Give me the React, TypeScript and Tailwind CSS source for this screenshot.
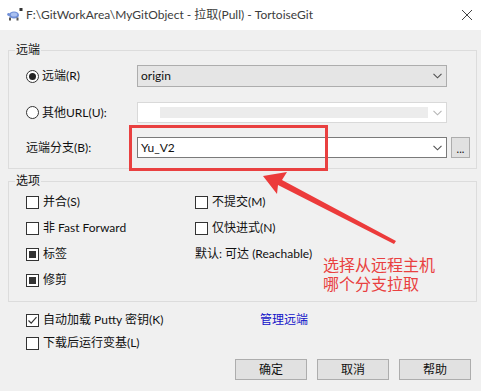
import React from "react";

const font = "font-['Lato','Noto_Sans_CJK_SC',sans-serif]";

function Chevron({ light }: { light?: boolean }) {
  return (
    <svg width="9" height="6" viewBox="0 0 9 6" className="shrink-0">
      <path d="M0.5 0.8 L4.5 4.8 L8.5 0.8" fill="none" stroke={light ? "#b5b5b5" : "#505050"} strokeWidth="1.1" />
    </svg>
  );
}

function Radio({ on }: { on?: boolean }) {
  return (
    <span className="w-[13px] h-[13px] rounded-full border border-[#333] bg-white flex items-center justify-center shrink-0">
      {on && <span className="w-[7px] h-[7px] rounded-full bg-[#222]" />}
    </span>
  );
}

function Check({ state }: { state?: "on" | "mixed" }) {
  return (
    <span className="w-[13px] h-[13px] border border-[#333] bg-white flex items-center justify-center shrink-0">
      {state === "mixed" && <span className="w-[7px] h-[7px] bg-[#333]" />}
      {state === "on" && (
        <svg width="11" height="11" viewBox="0 0 11 11">
          <path d="M1.5 5.5 L4.2 8.2 L9.5 2.2" fill="none" stroke="#333" strokeWidth="1.2" />
        </svg>
      )}
    </span>
  );
}

function Opt({ label, state }: { label: string; state?: "on" | "mixed" }) {
  return (
    <div className="flex items-center gap-[4px] h-[16px]">
      <Check state={state} />
      <span>{label}</span>
    </div>
  );
}

export default function App() {
  return (
    <div className={`w-[481px] h-[391px] bg-[#f0f0f0] relative overflow-hidden text-[12px] leading-[16px] text-[#111] ${font}`}>
      {/* title bar */}
      <div className="h-[30px] bg-white flex items-center pl-[7px] pr-[4px]">
        <svg width="16" height="16" viewBox="0 0 16 16" className="shrink-0">
          <ellipse cx="7" cy="8" rx="5" ry="3.6" fill="#6f8fd8" />
          <ellipse cx="7" cy="7.4" rx="3.2" ry="2" fill="#a9c0f0" />
          <rect x="2" y="10.5" width="2" height="3" fill="#555" />
          <rect x="9.5" y="10.5" width="2" height="3" fill="#555" />
          <circle cx="1.6" cy="7.5" r="1.4" fill="#6f8fd8" />
          <rect x="12.5" y="1" width="3" height="3" fill="#333" />
        </svg>
        <span className="ml-[3px] text-[#3c3c3c]">F:\GitWorkArea\MyGitObject - 拉取(Pull) - TortoiseGit</span>
        <svg width="12" height="12" viewBox="0 0 12 12" className="ml-auto mr-[4px]">
          <path d="M1 1 L11 11 M11 1 L1 11" stroke="#444" strokeWidth="1" />
        </svg>
      </div>

      <div className="pl-[8px]">
        {/* remote group */}
        <fieldset className="mt-[12px] w-[469px] border border-[#dcdcdc]">
          <legend className="ml-[6px] px-[1px]">远端</legend>
          <div className="pl-[17px] pt-[7px] pb-[10px]">
            <div className="flex items-center h-[22px]">
              <div className="w-[111px] flex items-center gap-[3px]">
                <Radio on />
                <span>远端(R)</span>
              </div>
              <div className="w-[310px] h-[22px] bg-[#e5e5e5] border border-[#adadad] flex items-center pl-[3px] pr-[4px]">
                <span className="flex-1">origin</span>
                <Chevron />
              </div>
            </div>
            <div className="flex items-center h-[21px] mt-[15px]">
              <div className="w-[111px] flex items-center gap-[3px]">
                <Radio />
                <span>其他URL(U):</span>
              </div>
              <div className="w-[310px] h-[21px] bg-white border border-[#d9d9d9] flex items-center pl-[22px] pr-[4px]">
                <div className="w-[268px] h-[11px] bg-[#ececec]" />
                <span className="ml-auto">
                  <Chevron light />
                </span>
              </div>
            </div>
            <div className="flex items-center h-[21px] mt-[14px]">
              <div className="w-[111px]">远端分支(B):</div>
              <div className="w-[310px] h-[21px] bg-white border border-[#7a7a7a] flex items-center pl-[3px] pr-[4px]">
                <span className="flex-1">Yu_V2</span>
                <Chevron />
              </div>
              <div className="ml-[4px] w-[19px] h-[21px] bg-[#e1e1e1] border border-[#adadad] flex items-end justify-center pb-[3px] text-[11px] leading-[11px]">
                ...
              </div>
            </div>
          </div>
        </fieldset>

        {/* options group */}
        <fieldset className="mt-[4px] w-[469px] border border-[#dcdcdc]">
          <legend className="ml-[6px] px-[1px]">选项</legend>
          <div className="pl-[17px] pt-[5px] pb-[13px] grid grid-cols-[169px_1fr] gap-y-[10px]">
            <Opt label="并合(S)" />
            <Opt label="不提交(M)" />
            <Opt label="非 Fast Forward" />
            <Opt label="仅快进式(N)" />
            <Opt label="标签" state="mixed" />
            <div className="h-[16px]">默认: 可达 (Reachable)</div>
            <Opt label="修剪" state="mixed" />
          </div>
        </fieldset>

        <div className="pl-[18px] mt-[10px] flex items-center">
          <div className="w-[234px]">
            <Opt label="自动加载 Putty 密钥(K)" state="on" />
          </div>
          <span className="text-[#1212c8]">管理远端</span>
        </div>
        <div className="pl-[18px] mt-[7px]">
          <Opt label="下载后运行变基(L)" />
        </div>

        <div className="mt-[8px] flex justify-end gap-[10px] pr-[10px]">
          {["确定", "取消", "帮助"].map((b) => (
            <div key={b} className="w-[72px] h-[21px] bg-[#e1e1e1] border border-[#adadad] flex items-center justify-center">
              {b}
            </div>
          ))}
        </div>
      </div>

      {/* annotation overlay */}
      <div className="absolute left-[129px] top-[125px] w-[199px] h-[46px] border-[3px] border-[#e94040]" />
      <svg className="absolute left-0 top-0 pointer-events-none" width="481" height="391" viewBox="0 0 481 391">
        <polygon
          points="263,176 287,172 282,180 396,241 394,244 278,185 277,194"
          fill="#ec3b3b"
        />
      </svg>
      <div className="absolute left-[323px] top-[255px] text-[16px] text-[#e94040]">
        <div className="leading-[19px]">选择从远程主机</div>
        <div className="leading-[19px]">哪个分支拉取</div>
      </div>
    </div>
  );
}
